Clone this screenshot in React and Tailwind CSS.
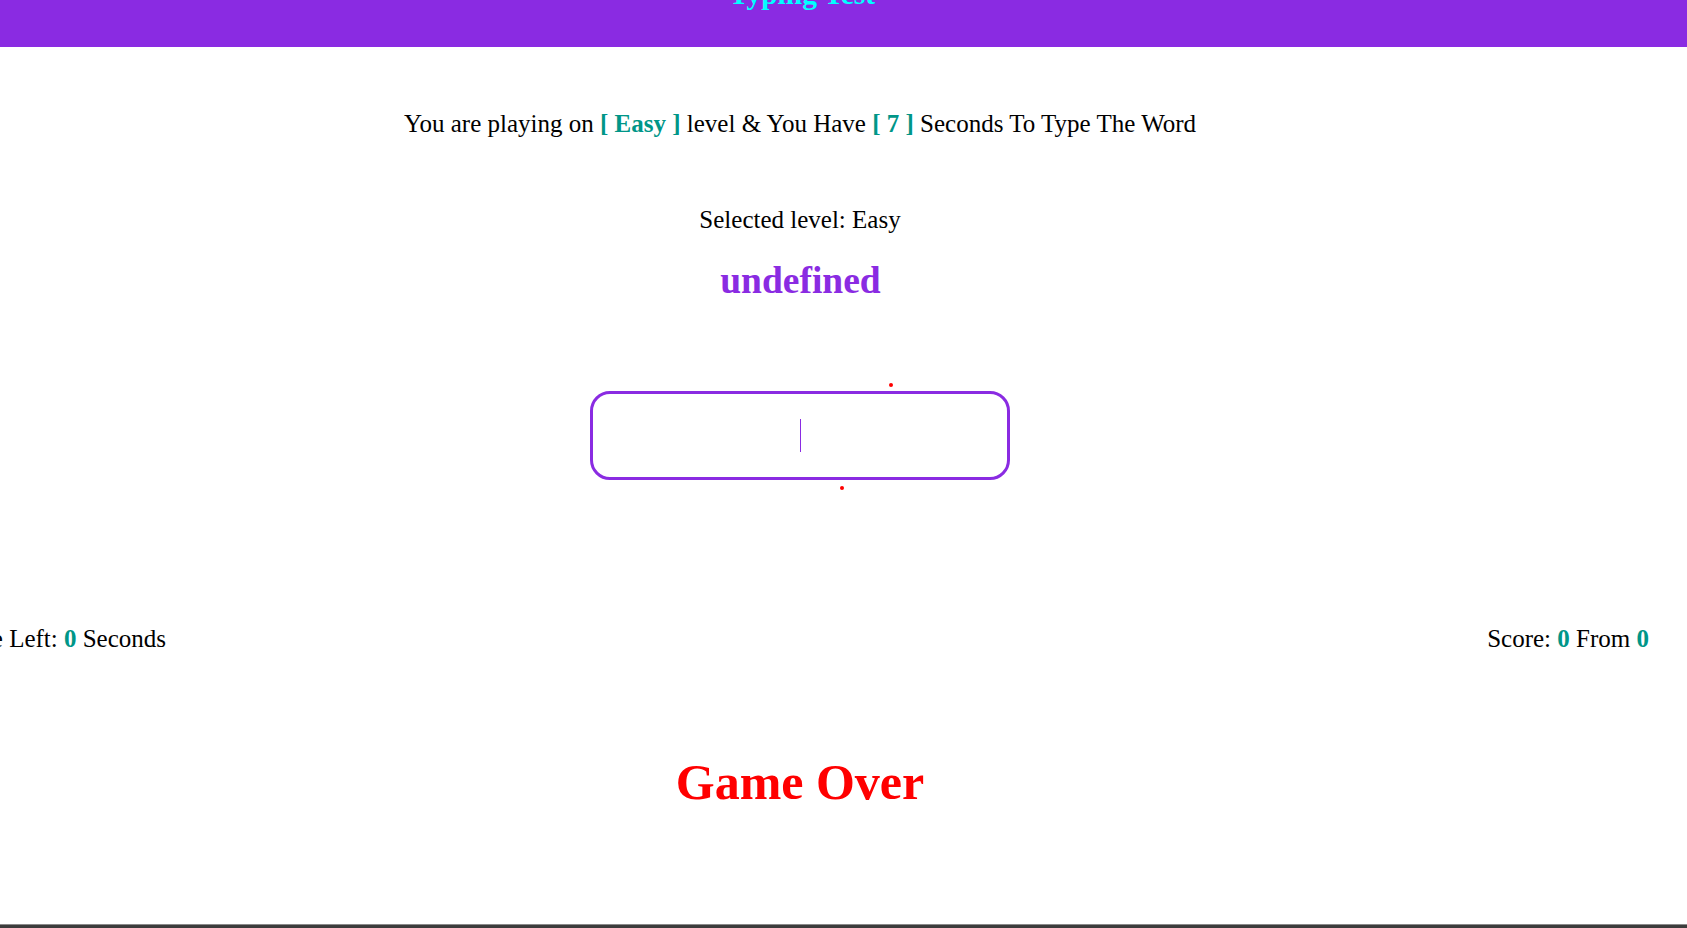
import React from "react";

export default function App() {
  return (
    <div className="h-[928px] w-full overflow-hidden flex flex-col bg-white font-['Liberation_Serif','Times_New_Roman',serif] text-black">
      <header className="h-[47px] shrink-0 bg-[#8a2be2] overflow-hidden">
        <div className="w-[1698px] -ml-[47px] text-center">
          <h1 className="-mt-[22px] text-[29.5px] leading-[32px] font-bold text-[#00ffff]">Typing Test</h1>
        </div>
      </header>
      <main className="w-[1698px] -ml-[49px] flex-1 shrink-0 text-center text-[25px] leading-[29px]">
        <p className="mt-[62px]">
          You are playing on <span className="font-bold text-[#009688]">[ Easy ]</span> level &amp; You Have{" "}
          <span className="font-bold text-[#009688]">[ 7 ]</span> Seconds To Type The Word
        </p>
        <p className="mt-[67px]">Selected level: Easy</p>
        <p className="mt-[25px] pl-[1px] text-[37.5px] leading-[43px] font-bold text-[#8a2be2]">undefined</p>
        <div className="mt-[89px] mx-auto relative w-[420px] h-[89px] border-[3px] border-[#8a2be2] rounded-[20px] flex items-center justify-center">
          <span className="block w-px h-[33px] bg-[#8a2be2]" />
          <span className="absolute left-[296px] -top-[11px] w-[4px] h-[4px] rounded-full bg-[#ff0000]" />
          <span className="absolute left-[247px] top-[92px] w-[4px] h-[4px] rounded-full bg-[#ff0000]" />
        </div>
        <div className="mt-[144px] flex justify-between">
          <p>
            Time Left: <span className="font-bold text-[#009688]">0</span> Seconds
          </p>
          <p>
            Score: <span className="font-bold text-[#009688]">0</span> From{" "}
            <span className="font-bold text-[#009688]">0</span>
          </p>
        </div>
        <p className="mt-[101px] text-[50px] leading-[56px] font-bold text-[#ff0000]">Game Over</p>
      </main>
      <div className="h-[4px] shrink-0 bg-[#3c3c3c] border-t border-[#8a8a8a]" />
    </div>
  );
}
